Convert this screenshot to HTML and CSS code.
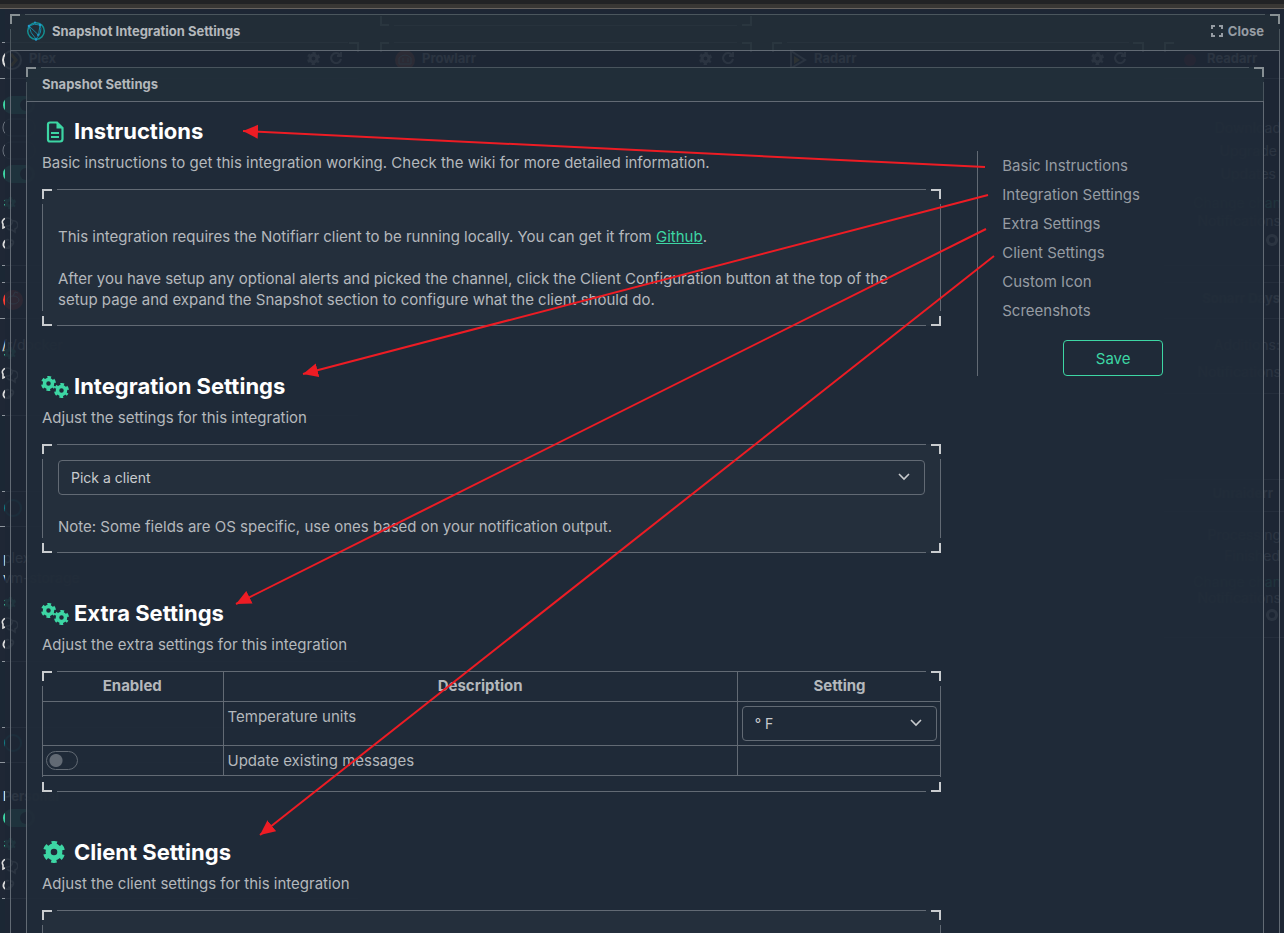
FILE: index.html
```html
<!DOCTYPE html>
<html lang="en">
<head>
<meta charset="utf-8">
<title>Snapshot Integration Settings</title>
<link rel="stylesheet" href="styles.css">
</head>
<body>
<svg class="backdrop" width="1284" height="933" viewBox="0 0 1284 933" aria-hidden="true">
  <defs>
    <symbol id="gear" viewBox="0 0 24 24">
      <circle cx="12" cy="12" r="6.4" fill="none" stroke="currentColor" stroke-width="5.6"/>
      <circle cx="12" cy="12" r="9.6" fill="none" stroke="currentColor" stroke-width="4.8" stroke-dasharray="5.4 4.653" stroke-dashoffset="2.7" transform="rotate(30 12 12)"/>
    </symbol>
    <symbol id="reload" viewBox="0 0 12 12">
      <path d="M10 3A5 5 0 1 0 11 7M11 0V4H7" fill="none" stroke="currentColor" stroke-width="2"/>
    </symbol>
    <symbol id="side-icons" viewBox="0 0 18 52">
      <use href="#gear" x="4" y="0" width="12" height="12" color="#3dd6a4"/>
      <path d="M3 27a5 4 0 1 1 4 2l-4 2zM12 24a4 4 0 0 1 3 8v3l-3-2a5 4 0 0 1-5-2" fill="none" stroke="#ddd" stroke-width="1.6"/>
      <path d="M9 43c-5-2-8 7-3 8s6-3 6-5M8 49c4 2 8-5 3-6" fill="none" stroke="#ddd" stroke-width="1.8"/>
    </symbol>
  </defs>
  <rect width="1284" height="933" fill="#1b2734"/>
  <g fill="#1f2735">
    <path d="M0 42H358V265H0zM0 282H358V415H0zM0 491H358V661H0zM0 727H358V898H0z"/>
    <path d="M380 9H751V25H380zM380 42H751V265H380zM773 42H1143V265H773zM1164 42H1284V265H1164zM1164 282H1284V393H1164zM1164 479H1284V637H1164z"/>
  </g>
  <g stroke="#8d949c" fill="none">
    <path d="M2 42.500H348M0 78.500H358M2 265.500H358M2 282.500H358M0 318.500H358M2 415.500H358M2 491.500H358M0 526.500H358M2 661.500H358M2 727.500H358M0 762.500H358M2 898.500H358"/>
    <path d="M1164 78.500H1284M1164 265.500H1284M1164 282.500H1284M1164 318.500H1284M1164 393.500H1284M1164 479.500H1284M1164 511.500H1284M1164 637.500H1284M394 25.500H737M394 42.500H737M787 42.500H1129"/>
    <path d="M349 43H358V52M381 16V25H389M742 25H751V16M381 52V43H389M742 43H751V52M773 52V43H782M1133 43H1143V52M1165 52V43H1174" stroke="#ddd" stroke-width="2"/>
  </g>
  <g fill="#ddd" class="backdrop-title">
    <text x="29" y="63">Plex</text><text x="422" y="63">Prowlarr</text><text x="814" y="63">Radarr</text><text x="1207" y="63">Readarr</text>
    <text x="1280" y="303" text-anchor="end">Sonarr Days</text><text x="1273" y="498" text-anchor="end">Unraiderr</text>
    <text x="3" y="801">Personal</text>
  </g>
  <g fill="#ddd" class="backdrop-text" text-anchor="end">
    <text x="1281" y="133">Download</text><text x="1277" y="156">Upgrade</text><text x="1276" y="179">Updates</text><text x="1280" y="350">Additions:</text>
    <text x="1281" y="226">Notifications</text><text x="1281" y="377">Notifications</text><text x="1281" y="603">Notifications</text><text x="1281" y="540">Processing</text><text x="1280" y="561">Finished</text>
    <text x="1281" y="208" fill="#3dd6a4">Change chan</text><text x="1281" y="587" fill="#3dd6a4">Change chan</text>
  </g>
  <g fill="#ddd" class="backdrop-text">
    <text x="2" y="350">/r/docker</text><text x="3" y="563">plex</text><text x="3" y="583">vm-storage</text>
  </g>
  <g color="#ddd">
    <use href="#gear" x="307" y="52" width="13" height="13"/><use href="#reload" x="330" y="52" width="12" height="12"/>
    <use href="#gear" x="699" y="52" width="13" height="13"/><use href="#reload" x="722" y="52" width="12" height="12"/>
    <use href="#gear" x="1091" y="52" width="13" height="13"/><use href="#reload" x="1114" y="52" width="12" height="12"/>
    <use href="#side-icons" x="0" y="197" width="18" height="52"/><use href="#side-icons" x="0" y="347" width="18" height="52"/>
    <use href="#side-icons" x="0" y="597" width="18" height="52"/><use href="#side-icons" x="0" y="838" width="18" height="52"/>
  </g>
  <circle cx="12" cy="60" r="9" fill="none" stroke="#ddd" stroke-width="2"/><path d="M11 54l5 6-5 6" fill="none" stroke="#e5a00d" stroke-width="3"/>
  <circle cx="405" cy="60" r="10" fill="#e66a3c"/><path d="M399 58q6-6 12 0v6h-12zM403 58v4M408 58v4" fill="none" stroke="#ddd"/>
  <path d="M791 51l14 9-14 8z" fill="none" stroke="#ddd" stroke-width="2"/><path d="M794 56l6 4-6 4z" fill="#ffc230"/>
  <circle cx="1190" cy="60" r="6" fill="#8e2530"/>
  <g fill="#3dd6a4"><rect x="3" y="96" width="32" height="18" rx="9"/><rect x="3" y="165" width="32" height="18" rx="9"/><rect x="3" y="809" width="32" height="18" rx="9"/></g>
  <g fill="#152030"><circle cx="26" cy="105" r="6"/><circle cx="26" cy="174" r="6"/><circle cx="26" cy="818" r="6"/></g>
  <g fill="none" stroke="#69717c"><rect x="3" y="119" width="32" height="17" rx="8"/><rect x="3" y="142" width="32" height="17" rx="8"/></g>
  <circle cx="13" cy="300" r="10" fill="#ff3b30"/><path d="M7 300a6 4 0 1 0 12 0 6 4 0 1 0-12 0M13 296l2-4 3 1" fill="none" stroke="#fff"/>
  <g fill="none" stroke="#128089" stroke-width="2"><circle cx="13" cy="508" r="8"/><circle cx="13" cy="743" r="8"/></g>
  <g fill="#ddd"><circle cx="1272" cy="240" r="6"/><circle cx="1272" cy="615" r="6"/></g>
  <g fill="#1f2735"><circle cx="1272" cy="240" r="3"/><circle cx="1272" cy="615" r="3"/></g>
  <rect class="veil" x="5" y="9" width="1279" height="924"/>
  <rect width="1284" height="4" fill="#222325"/><rect y="4" width="1284" height="4" fill="#393734"/><rect y="8" width="1284" height="1" fill="#68635f"/>
</svg>

<div class="modal" role="dialog" aria-labelledby="dialog-title">
  <header class="modal-header">
    <svg class="logo" viewBox="0 0 20 20" aria-hidden="true">
      <circle cx="10" cy="10" r="8.300" fill="none" stroke="#148f91" stroke-width="1.500"/>
      <path d="M3 5Q8 2 14 4L12.500 14 3 5Q4 12 10 18M14 4Q17 11 10 18" fill="none" stroke="#1689a5" stroke-width="1"/>
      <g fill="#2398cc"><circle cx="3" cy="5" r="1.300"/><circle cx="14" cy="4" r="1.300"/><circle cx="10" cy="18.500" r="1.300"/><circle cx="12" cy="14" r="1"/><circle cx="9" cy="1.500" r="1"/></g>
    </svg>
    <h1 id="dialog-title">Snapshot Integration Settings</h1>
    <button class="close" type="button">
      <svg viewBox="0 0 12 12" aria-hidden="true"><path d="M1 4V1h3M8 1h3v3M11 8v3H8M4 11H1V8" fill="none" stroke="currentColor" stroke-width="2"/></svg>
      Close
    </button>
  </header>
  <div class="modal-body">
    <div class="card">
      <h2 class="card-header">Snapshot Settings</h2>
      <div class="card-body">
        <main class="sections">
          <section id="instructions">
            <h3><svg class="icon" viewBox="0 0 26 24" aria-hidden="true"><path d="M8 2.500h7l5.500 5.500v11q0 2.500-2.500 2.500H8q-2 0-2-2v-15q0-2 2-2z" fill="none" stroke="currentColor" stroke-width="2.200"/><path d="M14.500 2v6.500H21zM9 12h8v2H9zM9 16h8v2H9z" fill="currentColor"/></svg>Instructions</h3>
            <p class="desc">Basic instructions to get this integration working. Check the wiki for more detailed information.</p>
            <div class="frame notes">
              <p>This integration requires the Notifiarr client to be running locally. You can get it from <a href="#github">Github</a>.</p>
              <p>After you have setup any optional alerts and picked the channel, click the Client Configuration button at the top of the setup page and expand the Snapshot section to configure what the client should do.</p>
            </div>
          </section>
          <section id="integration">
            <h3><svg class="icon" viewBox="0 0 26 24" aria-hidden="true"><use href="#gear" x="-1" y="1" width="15" height="15"/><use href="#gear" x="12" y="8" width="15" height="15"/></svg>Integration Settings</h3>
            <p class="desc">Adjust the settings for this integration</p>
            <div class="frame">
              <div class="select">
                <select aria-label="Client"><option>Pick a client</option></select>
                <svg viewBox="0 0 12 8" aria-hidden="true"><path d="M1 1l5 5 5-5" fill="none" stroke="currentColor" stroke-width="1.600"/></svg>
              </div>
              <p class="note">Note: Some fields are OS specific, use ones based on your notification output.</p>
            </div>
          </section>
          <section id="extra">
            <h3><svg class="icon" viewBox="0 0 26 24" aria-hidden="true"><use href="#gear" x="-1" y="1" width="15" height="15"/><use href="#gear" x="12" y="8" width="15" height="15"/></svg>Extra Settings</h3>
            <p class="desc">Adjust the extra settings for this integration</p>
            <div class="frame table-frame">
              <table>
                <colgroup><col class="col-enabled"><col><col class="col-setting"></colgroup>
                <thead><tr><th>Enabled</th><th>Description</th><th>Setting</th></tr></thead>
                <tbody>
                  <tr><td></td><td><label for="units">Temperature units</label></td><td>
                    <div class="select">
                      <select id="units"><option>° F</option></select>
                      <svg viewBox="0 0 12 8" aria-hidden="true"><path d="M1 1l5 5 5-5" fill="none" stroke="currentColor" stroke-width="1.600"/></svg>
                    </div></td></tr>
                  <tr><td><input class="switch" id="update" type="checkbox"></td><td><label for="update">Update existing messages</label></td><td></td></tr>
                </tbody>
              </table>
            </div>
          </section>
          <section id="client">
            <h3><svg class="icon" viewBox="0 0 26 24" aria-hidden="true"><use href="#gear" x="1" y="1" width="22" height="22"/></svg>Client Settings</h3>
            <p class="desc">Adjust the client settings for this integration</p>
            <div class="frame empty"></div>
          </section>
        </main>
        <nav class="side" aria-label="Sections">
          <a href="#instructions">Basic Instructions</a>
          <a href="#integration">Integration Settings</a>
          <a href="#extra">Extra Settings</a>
          <a href="#client">Client Settings</a>
          <a href="#icon">Custom Icon</a>
          <a href="#screenshots">Screenshots</a>
          <button class="save" type="button">Save</button>
        </nav>
      </div>
    </div>
  </div>
</div>

<svg class="arrows" width="1284" height="933" viewBox="0 0 1284 933" aria-hidden="true">
  <defs><marker id="head" markerUnits="userSpaceOnUse" markerWidth="16" markerHeight="16" refX="15" refY="8" orient="auto"><path d="M0 1L15 8 0 15z" fill="#ed1c24"/></marker></defs>
  <g stroke="#ed1c24" stroke-width="2" marker-end="url(#head)">
    <path d="M985 167L243 131"/><path d="M988 195L303 374"/><path d="M986 229L236 604"/><path d="M994 256L260 835"/>
  </g>
</svg>
</body>
</html>
```
FILE: styles.css
```css
:root {
  --line: #626a74;
  --corner: #c9cccf;
  --text: #b4b8bc;
  --muted: #969ca3;
  --accent: #3dd6a4;
}

* { box-sizing: border-box; }

html, body { height: 100%; }

body {
  margin: 0;
  overflow: hidden;
  position: relative;
  background: #1b2734;
  color: var(--text);
  font: 15px/21px Inter, "Liberation Sans", sans-serif;
}

h1, h2, h3, p { margin: 0; }

button, select { font: inherit; }

.backdrop, .arrows { position: absolute; top: 0; left: 0; pointer-events: none; }
.backdrop { z-index: -1; }
.backdrop-title { font-size: 13px; font-weight: 700; }
.backdrop-text { font-size: 14px; }
.veil { fill: #1d2735; opacity: .93; }

/* Thin outline with bright brackets at each corner */
.modal, .card, .frame {
  --w: calc(100% - 30px);
  background:
    linear-gradient(var(--corner), var(--corner)) 0 0 / 10px 2px,
    linear-gradient(var(--corner), var(--corner)) 0 0 / 2px 10px,
    linear-gradient(var(--corner), var(--corner)) 100% 0 / 10px 2px,
    linear-gradient(var(--corner), var(--corner)) 100% 0 / 2px 10px,
    linear-gradient(var(--corner), var(--corner)) 0 100% / 10px 2px,
    linear-gradient(var(--corner), var(--corner)) 0 100% / 2px 10px,
    linear-gradient(var(--corner), var(--corner)) 100% 100% / 10px 2px,
    linear-gradient(var(--corner), var(--corner)) 100% 100% / 2px 10px,
    linear-gradient(var(--line), var(--line)) 50% 0 / var(--w) 1px,
    linear-gradient(var(--line), var(--line)) 50% 100% / var(--w) 1px,
    linear-gradient(var(--line), var(--line)) 0 50% / 1px var(--w),
    linear-gradient(var(--line), var(--line)) 100% 50% / 1px var(--w),
    var(--fill, transparent);
  background-repeat: no-repeat;
}

.modal { margin: 0 4px 0 10px; position: relative; top: 14px; }

.modal-header {
  display: flex;
  align-items: center;
  gap: 6px;
  height: 37px;
  padding: 0 16px 2px;
  border-bottom: 1px solid var(--line);
  background: #2a393c66;
}

.modal-header h1, .card-header { font-size: 13px; line-height: 20px; font-weight: 700; }

.logo { width: 20px; height: 20px; }

.close {
  display: flex;
  align-items: center;
  gap: 5px;
  margin-left: auto;
  padding: 0;
  border: 0;
  background: none;
  color: var(--muted);
  font-size: 13px;
  font-weight: 700;
}
.close svg { width: 12px; height: 12px; }

.modal-body { padding: 16px; }

.card { --fill: #202b38e6; }

.card-header {
  height: 35px;
  padding: 7px 16px;
  border-bottom: 1px solid var(--line);
  background: #26343b66;
}

.card-body {
  display: grid;
  grid-template-columns: 75fr 25fr;
  gap: 7px;
  padding: 16px;
}

.sections { display: grid; gap: 47px; min-width: 0; }

h3 {
  display: flex;
  align-items: center;
  gap: 6px;
  color: #fff;
  font-size: 22px;
  line-height: 27px;
  font-weight: 700;
}
.icon { width: 26px; height: 24px; overflow: visible; color: var(--accent); }

.desc { margin: 7px 0 16px; }

.frame { --fill: #242f3c; padding: 16px; }
.notes { padding-top: 37px; }
.notes p + p { margin-top: 21px; }
.notes a { color: var(--accent); }
.note { margin-top: 21px; }
.empty { height: 160px; }

.select { position: relative; color: #c8cbce; font-size: 14px; }
.select select {
  display: block;
  width: 100%;
  height: 35px;
  padding: 0 12px;
  appearance: none;
  border: 1px solid var(--line);
  border-radius: 4px;
  background: transparent;
  color: inherit;
}
.select svg { position: absolute; right: 15px; top: 13px; width: 12px; height: 8px; }

.table-frame { --fill: transparent; padding: 0 0 16px; }
table { width: 100%; table-layout: fixed; border-collapse: collapse; }
.col-enabled { width: 181px; }
.col-setting { width: 204px; }
th, td { height: 30px; padding: 4px; border: 1px solid var(--line); vertical-align: top; text-align: left; }
th { text-align: center; font-weight: 700; }
thead th { border-top: 0; }
tr > :first-child { border-left: 0; }
tr > :last-child { border-right: 0; }

.switch {
  appearance: none;
  display: block;
  width: 32px;
  height: 19px;
  margin: 1px 0 0;
  border: 1px solid var(--line);
  border-radius: 10px;
  background: radial-gradient(circle at 9px 50%, #626a74 6px, transparent 7px);
}

.side {
  align-self: start;
  display: flex;
  flex-direction: column;
  margin: 33px 0 0 29px;
  border-left: 1px solid var(--line);
}
.side a { padding: 4px 24px; color: var(--muted); text-decoration: none; }

.save {
  align-self: center;
  width: 100px;
  height: 36px;
  margin-top: 15px;
  border: 1px solid var(--accent);
  border-radius: 4px;
  background: none;
  color: var(--accent);
}
```
